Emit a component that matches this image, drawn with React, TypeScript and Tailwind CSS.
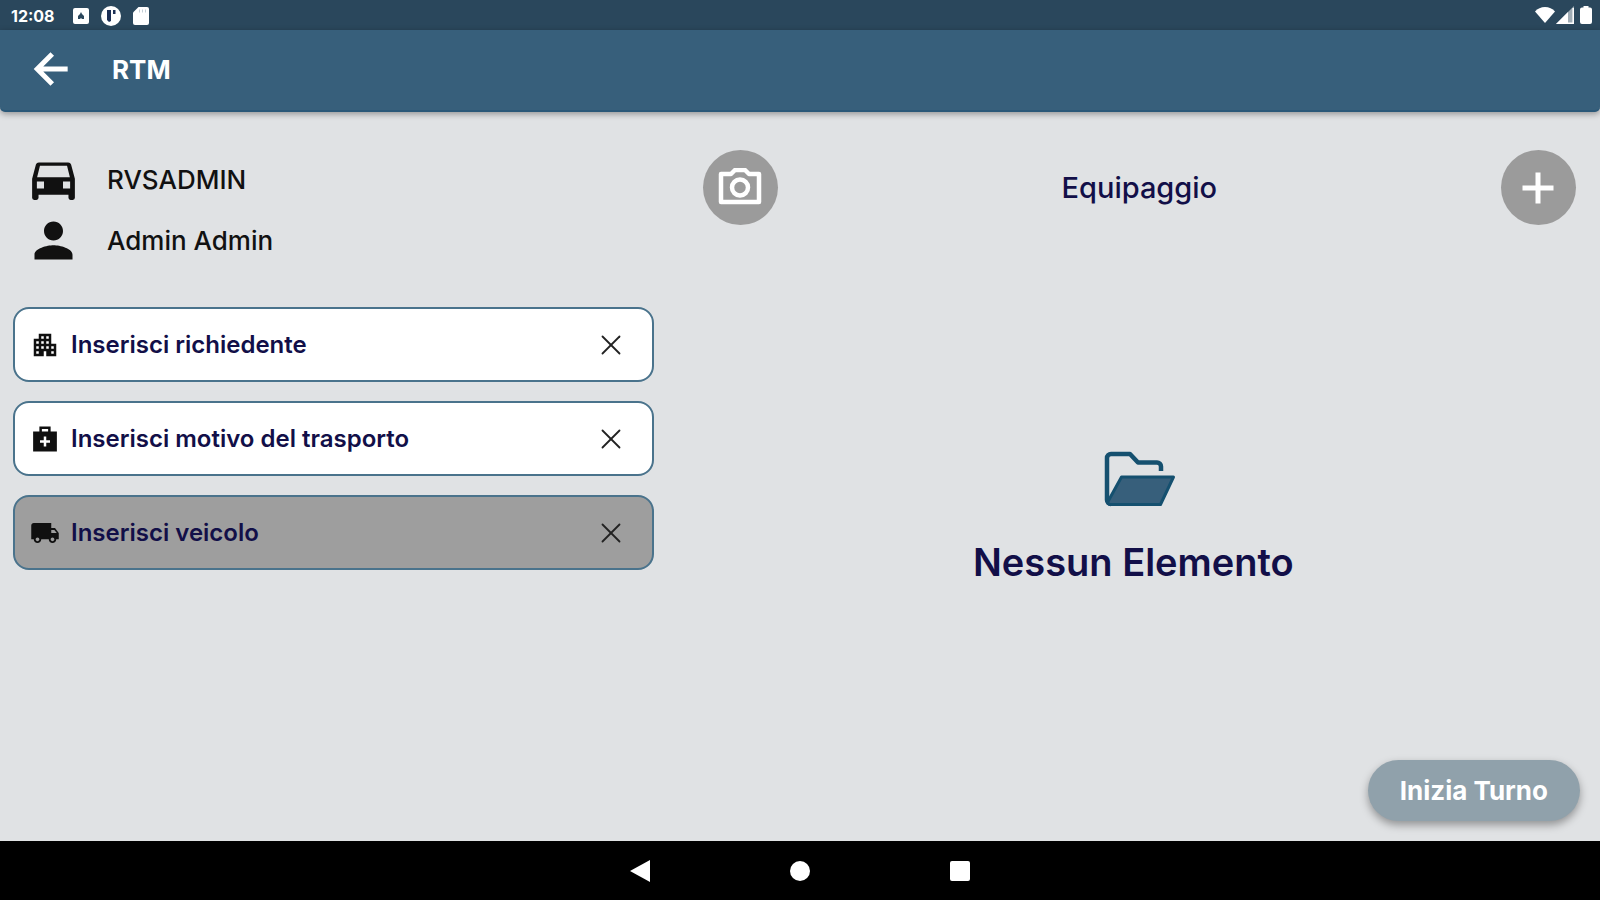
import { X } from "lucide-react";
import type { ComponentType } from "react";
import { MdApartment, MdLocalShipping, MdPerson } from "react-icons/md";

type IconType = ComponentType<{ className?: string }>;

interface FieldProps {
  id: string;
  label: string;
  icon: IconType;
  muted?: boolean;
}

function BackArrowIcon() {
  return (
    <svg className="size-[50px]" viewBox="0 0 24 24" fill="none" stroke="currentColor" aria-hidden="true">
      <path strokeWidth="2.400" d="M20 12H6M12.600 4.800L5.400 12l7.200 7.200" />
    </svg>
  );
}

function CarIcon({ className }: { className?: string }) {
  return (
    <svg className={className} viewBox="0 0 24 24" fill="currentColor" aria-hidden="true">
      <path
        fillRule="evenodd"
        d="M5.800 4.800h12.400q.9 0 1.200.9L21 11.700v8q0 .9-.9.900h-.9q-.9 0-.9-.9v-1.300H5.700v1.300q0 .9-.9.900h-.9q-.9 0-.9-.9v-8L4.600 5.700q.3-.9 1.200-.9zM6.300 6.200L5.100 11h13.800L17.700 6.200zM5 12.800v3h3v-3zM16 12.800v3h3v-3z"
      />
    </svg>
  );
}

function MedicalBagIcon({ className }: { className?: string }) {
  return (
    <svg className={className} viewBox="0 0 24 24" fill="currentColor" aria-hidden="true">
      <path
        fillRule="evenodd"
        d="M16.500 6V2h-9v4H2.500v16h19V6zM9.500 4h5v2h-5zM16 15h-3v3h-2v-3H8v-2h3v-3h2v3h3z"
      />
    </svg>
  );
}

function CameraIcon() {
  return (
    <svg className="h-10 w-11" viewBox="0 0 44 40" fill="none" stroke="currentColor" aria-hidden="true">
      <path strokeWidth="4.500" strokeLinejoin="round" d="M3 6h10l4-4h10l4 4h10v28H3z" />
      <circle cx="22" cy="19.500" r="8" strokeWidth="4.500" />
    </svg>
  );
}

function FolderIcon() {
  return (
    <svg className="h-[60px] w-24" viewBox="0 0 96 60" aria-hidden="true">
      <path
        fill="none"
        stroke="#15506f"
        strokeWidth="4.500"
        strokeLinejoin="round"
        d="M76 21v-4.500a4 4 0 0 0-4-4H53L45 4H26a4 4 0 0 0-4 4v42a4 4 0 0 0 4 4"
      />
      <path
        fill="#375f7b"
        stroke="#15506f"
        strokeWidth="3"
        strokeLinejoin="round"
        d="M36.500 27H88.500L75.500 54.500H26q-3.500 0-3-3z"
      />
    </svg>
  );
}

function StatusBar() {
  return (
    <div className="flex h-[30px] shrink-0 items-center justify-between bg-[#2a475c] pl-[11px] pr-2 text-white">
      <div className="flex items-center pt-px">
        <span className="w-[62px] text-base font-bold">12:08</span>
        <svg className="mr-3 size-4" viewBox="0 0 16 16" aria-hidden="true">
          <path
            fill="currentColor"
            fillRule="evenodd"
            d="M2 0h12a2 2 0 0 1 2 2v12a2 2 0 0 1-2 2H2a2 2 0 0 1-2-2V2a2 2 0 0 1 2-2zM8 4L7 6 5 8v3h2l1-1 1 1h2V8L9 6z"
          />
        </svg>
        <svg className="mr-3 size-5" viewBox="0 0 20 20" aria-hidden="true">
          <circle cx="10" cy="10" r="10" fill="currentColor" />
          <path fill="#1b2f55" d="M6 4h4v11l-2 1-2-2zM12 4h2.500v4H12z" />
        </svg>
        <svg className="h-[18px] w-4" viewBox="0 0 16 18" aria-hidden="true">
          <path fill="currentColor" d="M5.500 0H14a2 2 0 0 1 2 2v14a2 2 0 0 1-2 2H2a2 2 0 0 1-2-2V5.500z" />
          <path stroke="#c3ced6" d="M6.500 2.500v3M9.500 2.500v3M12.500 2.500v3" />
        </svg>
      </div>
      <div className="flex items-center">
        <svg className="h-4 w-5" viewBox="0 0 20 16" aria-hidden="true">
          <path fill="currentColor" d="M10 16L0 4.500C2.500 1.500 6 0 10 0s7.500 1.500 10 4.500z" />
        </svg>
        <svg className="ml-px size-[18px]" viewBox="0 0 18 18" aria-hidden="true">
          <path fill="currentColor" fillOpacity="0.550" d="M0 18L18 0v18z" />
          <path fill="currentColor" d="M0 18L12 6v12z" />
          <path fill="none" stroke="currentColor" strokeWidth="1.500" d="M2 17.200h15.200V2" />
        </svg>
        <svg className="ml-[6px] h-[18px] w-3" viewBox="0 0 12 18" aria-hidden="true">
          <path
            fill="currentColor"
            d="M3.500 0h5v1.500H10a2 2 0 0 1 2 2V16a2 2 0 0 1-2 2H2a2 2 0 0 1-2-2V3.500a2 2 0 0 1 2-2h1.500z"
          />
        </svg>
      </div>
    </div>
  );
}

function AppBar() {
  return (
    <header className="flex h-[82px] shrink-0 items-center gap-9 rounded-b-[5px] border-b-2 border-[#2a5878] bg-[#375f7b] pb-[2px] pl-[26px] text-white shadow-[0_2px_6px_rgba(0,0,0,0.35)]">
      <button type="button" aria-label="Indietro">
        <BackArrowIcon />
      </button>
      <h1 className="text-[26px] font-bold">RTM</h1>
    </header>
  );
}

function InfoRow({ icon: Icon, text }: { icon: IconType; text: string }) {
  return (
    <div className="flex items-center gap-[25px]">
      <Icon className="size-[57px]" />
      <span className="text-[26px] font-medium">{text}</span>
    </div>
  );
}

function Field({ id, label, icon: Icon, muted = false }: FieldProps) {
  return (
    <div
      className={`flex h-[75px] items-center rounded-2xl border-2 border-[#4a738c] pl-[15px] pr-6 ${
        muted ? "bg-[#9e9e9e]" : "bg-white"
      }`}
    >
      <Icon className="size-[30px] shrink-0 text-[#101010]" />
      <input
        id={id}
        type="text"
        aria-label={label}
        placeholder={label}
        className="ml-[11px] min-w-0 flex-1 bg-transparent text-2xl font-semibold text-[#120f48] outline-none placeholder:text-[#120f48] placeholder:opacity-100"
      />
      <button type="button" aria-label={`Cancella ${label}`} className="text-[#222]">
        <X className="size-[34px]" strokeWidth={1.3} />
      </button>
    </div>
  );
}

const roundButton =
  "flex size-[75px] items-center justify-center rounded-full bg-[#9b9b9b] text-white";

export default function App() {
  return (
    <div className="flex min-h-screen flex-col bg-[#e0e2e4] font-['Inter','Noto_Sans',sans-serif]">
      <StatusBar />
      <AppBar />
      <main className="grid flex-1 grid-cols-12">
        <section className="col-span-5 px-[13px] pt-[39px]">
          <div className="flex flex-col gap-1 pl-3 text-[#111]">
            <InfoRow icon={CarIcon} text="RVSADMIN" />
            <InfoRow icon={MdPerson} text="Admin Admin" />
          </div>
          <form className="mt-[38px] flex flex-col gap-[19px]">
            <Field id="richiedente" label="Inserisci richiedente" icon={MdApartment} />
            <Field id="motivo" label="Inserisci motivo del trasporto" icon={MedicalBagIcon} />
            <Field id="veicolo" label="Inserisci veicolo" icon={MdLocalShipping} muted />
          </form>
        </section>
        <section className="col-span-7 flex flex-col pb-5 pt-[38px]">
          <div className="flex items-center justify-between pl-9 pr-6">
            <button type="button" aria-label="Scatta foto" className={roundButton}>
              <CameraIcon />
            </button>
            <h2 className="text-[29px] font-medium text-[#120f48]">Equipaggio</h2>
            <button type="button" aria-label="Aggiungi" className={roundButton}>
              <svg className="size-8" viewBox="0 0 32 32" aria-hidden="true">
                <path stroke="currentColor" strokeWidth="5" d="M16 0.500v31M0.500 16h31" />
              </svg>
            </button>
          </div>
          <div className="flex flex-1 flex-col items-center justify-center gap-6 pt-14">
            <FolderIcon />
            <p className="text-[38px] font-semibold text-[#120f48]">Nessun Elemento</p>
          </div>
          <div className="flex justify-end pr-5">
            <button
              type="button"
              className="h-[61px] rounded-full bg-[#90a1ab] px-8 text-[26px] font-bold text-white shadow-[0_4px_8px_rgba(0,0,0,0.35)]"
            >
              Inizia Turno
            </button>
          </div>
        </section>
      </main>
      <nav className="flex h-[59px] shrink-0 items-center justify-center gap-[140px] bg-black text-white">
        <button type="button" aria-label="Indietro di sistema">
          <svg className="h-[22px] w-5" viewBox="0 0 20 22" aria-hidden="true">
            <path fill="currentColor" d="M20 0v22L0 11z" />
          </svg>
        </button>
        <button type="button" aria-label="Home" className="size-5 rounded-full bg-white" />
        <button type="button" aria-label="App recenti" className="size-5 rounded-xs bg-white" />
      </nav>
    </div>
  );
}
